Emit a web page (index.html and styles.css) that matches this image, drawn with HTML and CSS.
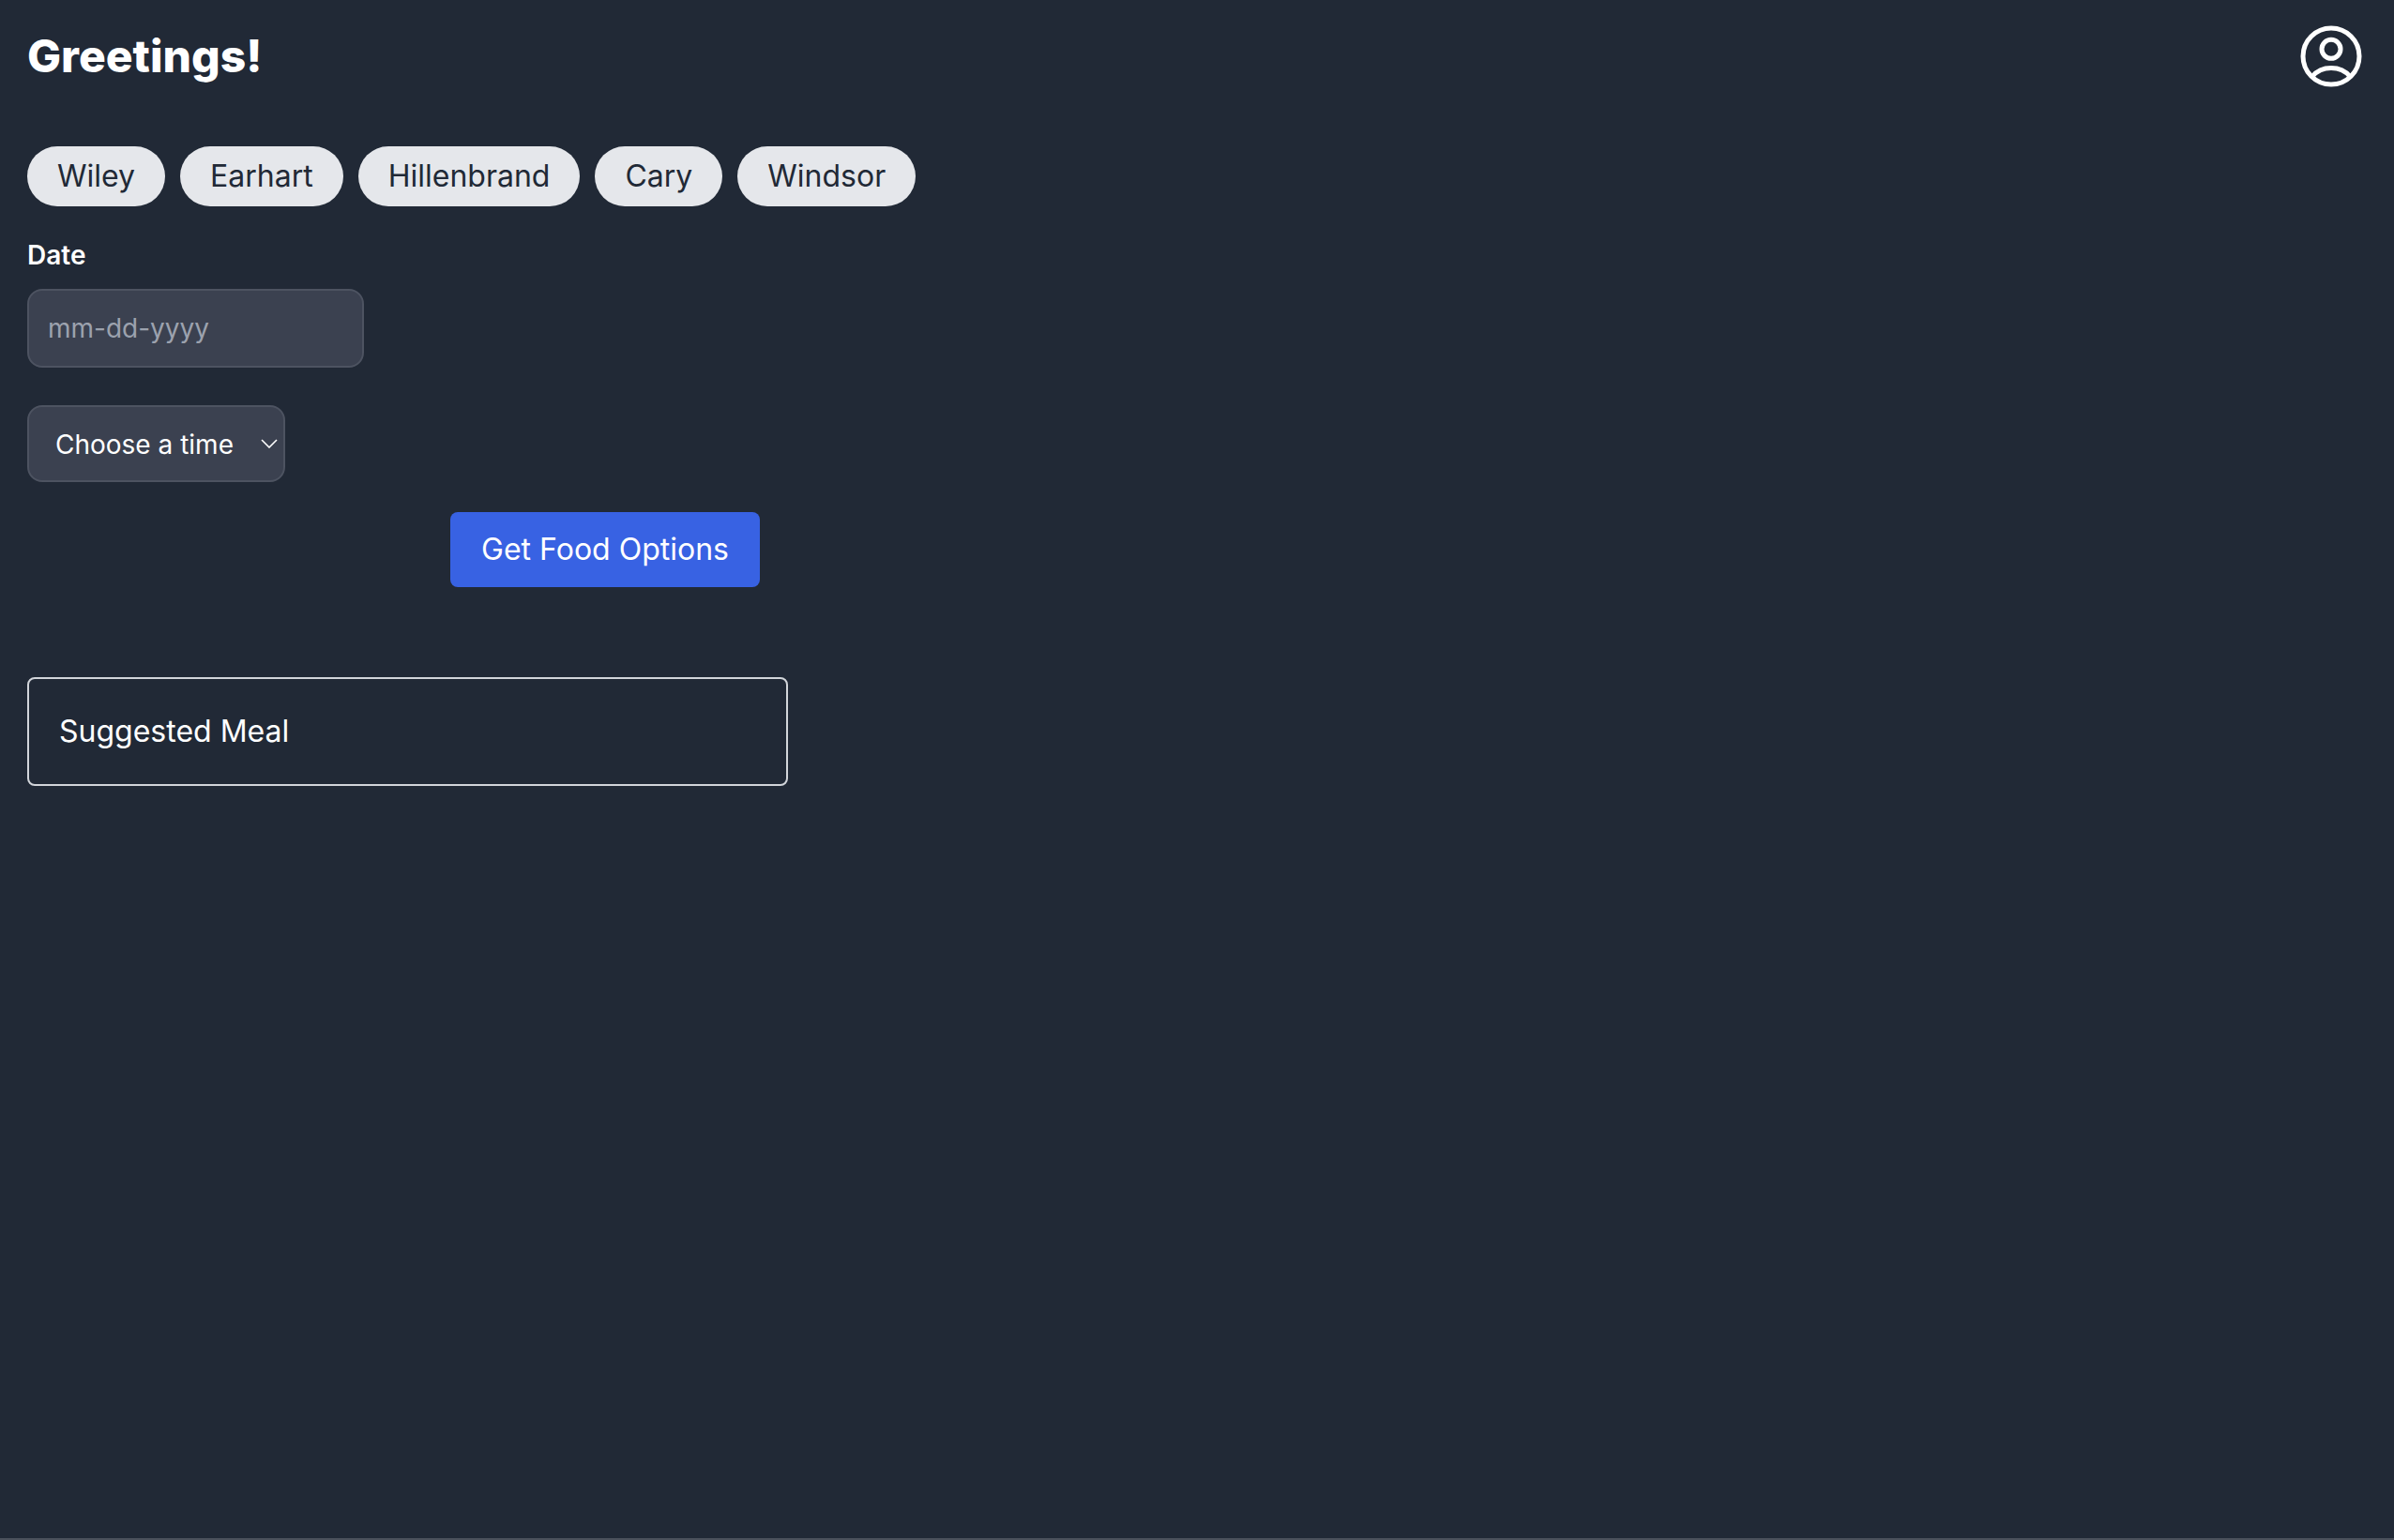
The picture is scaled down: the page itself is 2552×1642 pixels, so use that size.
FILE: index.html
```html
<!DOCTYPE html>
<html lang="en">
<head>
  <meta charset="UTF-8" />
  <meta name="viewport" content="width=device-width, initial-scale=1.0"/>
  <title>Greetings!</title>
  <link rel="stylesheet" href="styles.css">
</head>
<body>

  <header>
    <h1>Greetings!</h1>
    <a class="profile" href="#" aria-label="Profile">
      <svg viewBox="0 0 66 66" fill="none" stroke="currentColor" stroke-width="5">
        <circle cx="33" cy="33" r="30" />
        <circle cx="33" cy="25.3" r="10" />
        <path d="M13 54.5C17.5 49 24.5 45.5 33 45.5S48.5 49 53 54.5" />
      </svg>
    </a>
  </header>

  <main>
    <!-- Dining courts -->
    <div class="courts">
      <button type="button">Wiley</button>
      <button type="button">Earhart</button>
      <button type="button">Hillenbrand</button>
      <button type="button">Cary</button>
      <button type="button">Windsor</button>
    </div>

    <form id="mealForm">
      <label for="date">Date</label>
      <input type="text" id="date" name="date" placeholder="mm-dd-yyyy" required />

      <div class="select-wrap">
        <select id="time" name="time" aria-label="Time">
          <option selected>Choose a time</option>
          <option value="breakfast">Breakfast</option>
          <option value="lunch">Lunch</option>
          <option value="dinner">Dinner</option>
        </select>
        <svg class="chevron" viewBox="0 0 18 10" fill="none" stroke="currentColor" stroke-width="1.6">
          <path d="M1 1l8 8 8-8" />
        </svg>
      </div>

      <button type="submit" class="submit">Get Food Options</button>
    </form>

    <!-- Results -->
    <section class="meal">
      <p>Suggested Meal</p>
    </section>
  </main>

</body>
</html>
```

FILE: styles.css
```css
* {
  box-sizing: border-box;
}

body {
  margin: 0;
  min-height: 100vh;
  font-family: Inter, 'Liberation Sans', sans-serif;
  font-size: 32px;
  line-height: 48px;
  color: white;
  background: #212936;
  border-bottom: 2px solid #4b515c;
}

button, input, select {
  font: inherit;
  color: inherit;
}

button {
  border: none;
  cursor: pointer;
}

header {
  display: flex;
  align-items: center;
  justify-content: space-between;
  padding: 27px 34px 0 29px;
}

h1 {
  margin: 0;
  font-size: 48px;
  font-weight: 800;
  line-height: 64px;
}

.profile {
  color: white;
}

.profile svg {
  display: block;
  width: 66px;
  height: 66px;
}

main {
  padding: 63px 29px;
}

.courts {
  display: flex;
  flex-wrap: wrap;
  gap: 16px;
}

.courts button {
  padding: 8px 32px;
  border-radius: 32px;
  color: #212936;
  background: #e5e7eb;
}

form {
  display: flex;
  flex-direction: column;
  align-items: flex-start;
  max-width: 781px;
  margin-top: 32px;
  font-size: 28px;
  line-height: 40px;
}

label {
  margin-bottom: 16px;
  font-weight: 600;
}

input, select {
  border: 2px solid #4d5361;
  border-radius: 16px;
  background: #3b4150;
}

input {
  width: 359px;
  height: 84px;
  padding: 20px;
}

input::placeholder {
  color: #9ca2ae;
  opacity: 1;
}

.select-wrap {
  position: relative;
  margin-top: 40px;
}

select {
  display: block;
  width: 275px;
  height: 82px;
  padding: 20px 28px;
  appearance: none;
}

/* arrow over the right end of the select */
.chevron {
  position: absolute;
  top: 36px;
  right: 8px;
  width: 18px;
  height: 10px;
  pointer-events: none;
}

.submit {
  align-self: flex-end;
  min-width: 330px;
  margin-top: 32px;
  padding: 16px 32px;
  border-radius: 8px;
  font-size: 32px;
  line-height: 48px;
  background: #3862e3;
}

.meal {
  max-width: 811px;
  margin-top: 96px;
  padding: 32px;
  border: 2px solid #d2d5da;
  border-radius: 8px;
}

.meal p {
  margin: 0;
}
```
